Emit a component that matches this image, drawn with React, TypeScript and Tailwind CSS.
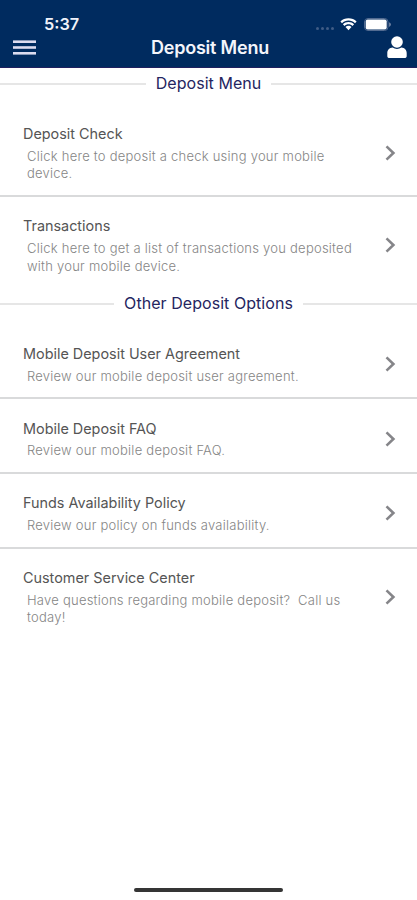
import React from 'react';

interface MenuItem {
  title: string;
  description: string;
}

interface MenuSection {
  heading: string;
  items: MenuItem[];
}

const sections: MenuSection[] = [
  {
    heading: 'Deposit Menu',
    items: [
      { title: 'Deposit Check', description: 'Click here to deposit a check using your mobile\ndevice.' },
      { title: 'Transactions', description: 'Click here to get a list of transactions you deposited\nwith your mobile device.' },
    ],
  },
  {
    heading: 'Other Deposit Options',
    items: [
      { title: 'Mobile Deposit User Agreement', description: 'Review our mobile deposit user agreement.' },
      { title: 'Mobile Deposit FAQ', description: 'Review our mobile deposit FAQ.' },
      { title: 'Funds Availability Policy', description: 'Review our policy on funds availability.' },
      { title: 'Customer Service Center', description: 'Have questions regarding mobile deposit?  Call us\ntoday!' },
    ],
  },
];

const StatusBar = () => (
  <div className="flex h-9 items-end justify-between pr-[26px] pl-[44px]">
    <span className="text-[16.3px] leading-[24px] font-semibold text-[#f0f2fa]">5:37</span>
    <div className="flex h-6 items-center">
      <div className="mt-[9px] mr-[6px] flex gap-[2px]">
        {[0, 1, 2, 3].map((dot) => (
          <span key={dot} className="h-[3px] w-[3px] rounded-full bg-[#3f5c86]" />
        ))}
      </div>
      <svg width="17" height="13" viewBox="0 0 17 13" fill="#fff" className="mr-[7px]">
        <path d="M8.5 0.3C5.3 0.3 2.5 1.5 0.4 3.5L2 5.2C3.7 3.6 6 2.6 8.5 2.6s4.8 1 6.5 2.6l1.6-1.7C14.5 1.5 11.7 0.3 8.5 0.3z" />
        <path d="M8.5 4C6.3 4 4.4 4.8 2.9 6.2l1.6 1.7c1-1 2.4-1.6 4-1.6s3 .6 4 1.6l1.6-1.7C12.6 4.8 10.7 4 8.5 4z" />
        <path d="M8.5 7.7c-1.2 0-2.2.5-3 1.2l3 3.3 3-3.3c-.8-.7-1.8-1.2-3-1.2z" />
      </svg>
      <svg width="27" height="13" viewBox="0 0 27 13">
        <rect x="0.5" y="0.5" width="23.5" height="12" rx="3.5" fill="none" stroke="#526b91" />
        <rect x="1.7" y="1.5" width="21" height="10" rx="2" fill="#fff" />
        <path d="M25.2 4.2c1 .4 1.6 1.3 1.6 2.3s-.6 1.9-1.6 2.3z" fill="#7d8eac" />
      </svg>
    </div>
  </div>
);

const Header = () => (
  <header className="h-[68px] border-b border-[#20205f] bg-[#002b5f]">
    <StatusBar />
    <div className="grid h-[23px] grid-cols-[1fr_auto_1fr] items-center pr-[10px] pl-[13px]">
      <button aria-label="Open menu">
        <svg width="23" height="15" viewBox="0 0 23 15" fill="#dcdcf0" className="block">
          <rect y="0.4" width="23" height="2.6" />
          <rect y="6.2" width="23" height="2.6" />
          <rect y="12" width="23" height="2.6" />
        </svg>
      </button>
      <h1 className="text-[18px] leading-[23px] font-semibold tracking-[-0.2px] text-[#f4f5fb]">Deposit Menu</h1>
      <button aria-label="Profile" className="justify-self-end">
        <svg width="20" height="23" viewBox="0 0 20 23" fill="#fff">
          <circle cx="10" cy="6" r="5.8" />
          <path d="M5.6 11.6c1.3.9 2.8 1.3 4.4 1.3s3.1-.4 4.4-1.3c3.2.2 5.3 2.5 5.3 5.6v2.7c0 1.4-.9 2.2-2.2 2.2h-15c-1.3 0-2.2-.8-2.2-2.2v-2.7c0-3.1 2.1-5.4 5.3-5.6z" />
        </svg>
      </button>
    </div>
  </header>
);

const SectionHeading = ({ children }: { children: React.ReactNode }) => (
  <div className="h-[37px]">
    <div className="flex h-8 items-center gap-[10px]">
      <span className="h-[2px] flex-1 bg-[#e6e6e6]" />
      <h2 className="pb-[2px] text-[16px] leading-5 tracking-[0.05px] text-[#25255f]">{children}</h2>
      <span className="h-[2px] flex-1 bg-[#e6e6e6]" />
    </div>
  </div>
);

const MenuRow = ({ item, last }: { item: MenuItem; last: boolean }) => (
  <li className={`flex items-center justify-between pt-[18.2px] pr-[21px] pb-[12.3px] pl-[23px] ${last ? '' : 'border-b-2 border-[#d9dadb]'}`}>
    <div>
      <h3 className="text-[14.4px] leading-[21.8px] text-[#555]">{item.title}</h3>
      <p className="mt-[3px] ml-1 text-[13px] leading-[17.5px] font-light tracking-[0.24px] whitespace-pre text-[#858585]">{item.description}</p>
    </div>
    <svg width="11" height="16" viewBox="0 0 11 16" fill="none" stroke="#858589" strokeWidth="2.6">
      <path d="M1.5 1.4L8.4 8L1.5 14.6" />
    </svg>
  </li>
);

export default function App() {
  return (
    <div className="flex h-[900px] w-[417px] flex-col overflow-hidden bg-white font-['Inter','Liberation_Sans',sans-serif]">
      <Header />
      <main className="flex-1">
        {sections.map((section) => (
          <section key={section.heading}>
            <SectionHeading>{section.heading}</SectionHeading>
            <ul>
              {section.items.map((item, i) => (
                <MenuRow key={item.title} item={item} last={i === section.items.length - 1} />
              ))}
            </ul>
          </section>
        ))}
      </main>
      {/* home indicator */}
      <div className="mx-auto mb-[8px] h-1 w-[149px] rounded-full bg-[#353535]" />
    </div>
  );
}
